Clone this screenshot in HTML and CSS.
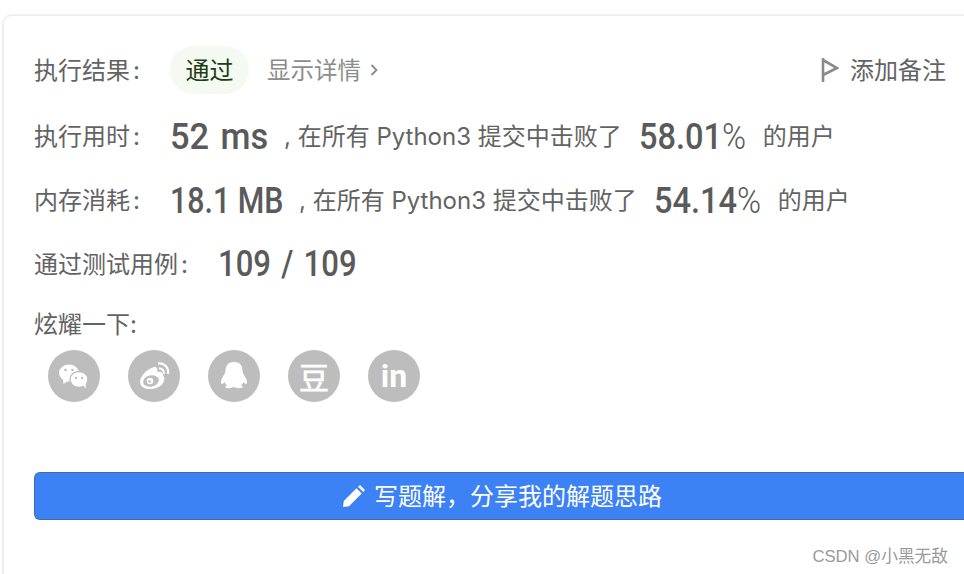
FILE: index.html
```html
<!DOCTYPE html>
<html lang="zh-CN">
<head>
    <meta charset="UTF-8">
    <meta name="viewport" content="width=device-width, initial-scale=1.0">
    <title>提交结果</title>
    <link rel="stylesheet" href="styles.css">
</head>
<body>
    <div class="card">
        <div class="row row-result">
            <span class="label">执行结果<i class="colon">:</i></span>
            <span class="pill">通过</span>
            <a class="details">显示详情
                <svg class="chevron" width="8" height="14" viewBox="0 0 8 14"><path d="M1.5 2 L6.5 7 L1.5 12" fill="none" stroke="#8a8a8a" stroke-width="1.8"/></svg>
            </a>
            <a class="note">
                <svg width="18" height="24" viewBox="0 0 18 24"><path d="M2 0 V24 M2 2 L16 10 L2 17" fill="none" stroke="#8a8a8a" stroke-width="2.6"/></svg>
                <span>添加备注</span>
            </a>
        </div>

        <div class="row row-time">
            <span class="label">执行用时<i class="colon">:</i></span>
            <span class="num num-time">52 ms</span>
            <span class="stat">, 在所有 Python3 提交中击败了</span>
            <span class="num num-pct">58.01<i class="percent">%</i></span>
            <span class="stat">的用户</span>
        </div>

        <div class="row row-memory">
            <span class="label">内存消耗<i class="colon">:</i></span>
            <span class="num num-mem">18.1 MB</span>
            <span class="stat">, 在所有 Python3 提交中击败了</span>
            <span class="num num-pct">54.14<i class="percent">%</i></span>
            <span class="stat">的用户</span>
        </div>

        <div class="row row-cases">
            <span class="label-wide">通过测试用例<i class="colon">:</i></span>
            <span class="num num-cases">109 / 109</span>
        </div>

        <div class="share-title">炫耀一下:</div>
        <div class="share">
            <div class="share-icon">
                <svg width="52" height="52" viewBox="0 0 52 52">
                    <ellipse cx="21" cy="23" rx="10" ry="8.5" fill="#fff"/>
                    <path d="M15 29 L15.5 34 L20 31 Z" fill="#fff"/>
                    <ellipse cx="31" cy="29.5" rx="9" ry="8" fill="#fff" stroke="#bdbdbd" stroke-width="1.4"/>
                    <path d="M35 35 L38 38.5 L37.5 33 Z" fill="#fff"/>
                    <circle cx="17.5" cy="20" r="1.3" fill="#bdbdbd"/>
                    <circle cx="24.5" cy="20" r="1.3" fill="#bdbdbd"/>
                    <circle cx="28" cy="28" r="1.2" fill="#bdbdbd"/>
                    <circle cx="34" cy="28" r="1.2" fill="#bdbdbd"/>
                </svg>
            </div>
            <div class="share-icon">
                <svg width="52" height="52" viewBox="0 0 52 52">
                    <path d="M12 32 C12 26 19 19 26 17 C29 16.5 30 19 29 22 C33 21 36 23 35 26 C38 27 37 38 23 39 C16 39.5 12 36 12 32 Z" fill="#fff"/>
                    <ellipse cx="23" cy="31" rx="8" ry="5.6" fill="#bdbdbd" transform="rotate(-12 23 31)"/>
                    <circle cx="22" cy="31" r="3.2" fill="#fff"/>
                    <circle cx="21.5" cy="31.5" r="1.2" fill="#bdbdbd"/>
                    <path d="M30 13.5 C36 12.5 41 17 40 24" fill="none" stroke="#fff" stroke-width="2.2"/>
                    <path d="M31 18.5 C34 18 36.5 20.5 35.8 24" fill="none" stroke="#fff" stroke-width="2"/>
                </svg>
            </div>
            <div class="share-icon">
                <svg width="52" height="52" viewBox="0 0 52 52">
                    <path d="M26 12 C19 12 17.5 17 17.5 21 C17.5 23 15 26 13.5 29.5 C12.5 32 13 34 14 34 C15 34 16 32.5 16.5 32 C17 33.5 18 34.5 19 35.5 C17 36 16.5 37.5 19 38 C22 38.5 25 37.5 26 37 C27 37.5 30 38.5 33 38 C35.5 37.5 35 36 33 35.5 C34 34.5 35 33.5 35.5 32 C36 32.5 37 34 38 34 C39 34 39.5 32 38.5 29.5 C37 26 34.5 23 34.5 21 C34.5 17 33 12 26 12 Z" fill="#fff"/>
                </svg>
            </div>
            <div class="share-icon share-text share-douban">豆</div>
            <div class="share-icon share-text share-linkedin">in</div>
        </div>

        <button class="solution">
            <svg width="24" height="24" viewBox="0 0 24 24"><path fill="#fff" d="M2 23 L2.8 17 L15.5 4.3 L20.7 9.5 L8 22.2 Z M17 2.8 L19 1 L24 6 L22.2 8 Z"/></svg>
            <span>写题解，分享我的解题思路</span>
        </button>
    </div>
    <div class="watermark">CSDN @小黑无敌</div>
</body>
</html>
```

FILE: styles.css
```css
* {
    box-sizing: border-box;
}

html, body {
    height: 100%;
}

body {
    margin: 0;
    position: relative;
    overflow: hidden;
    background-color: white;
    color: #636363;
    font-family: Inter, "Noto Sans CJK SC", sans-serif;
    font-size: 24px;
}

.card {
    height: 560px;
    margin-top: 14px;
    margin-left: 2px;
    padding: 30px 0 0 30px;
    border: 2px solid #efefef;
    border-right: none;
    border-bottom: none;
    border-top-left-radius: 10px;
}

.row {
    display: flex;
    align-items: center;
    height: 48px;
    padding-right: 18px;
}

.row-result {
    margin-bottom: 18px;
}

.row-time,
.row-memory {
    margin-bottom: 16px;
}

.label,
.label-wide,
.stat,
.note span {
    padding-bottom: 4px;
}

.label {
    width: 136px;
    flex-shrink: 0;
}

.label-wide {
    width: 184px;
    flex-shrink: 0;
}

.colon {
    font-style: normal;
    margin-left: 3px;
}

.pill {
    width: 79px;
    height: 48px;
    line-height: 49px;
    text-align: center;
    border-radius: 24px;
    background-color: #f4f9f1;
    color: #1f3d14;
}

.details {
    display: flex;
    align-items: center;
    gap: 9px;
    margin-left: 18px;
    padding-bottom: 2px;
    color: #8c8c8c;
    font-size: 23.5px;
}

.chevron {
    margin-top: 2px;
}

.note {
    display: flex;
    align-items: center;
    gap: 11px;
    margin-left: auto;
}

/* the original digits are a condensed face, none is installed */
.num {
    display: inline-block;
    flex-shrink: 0;
    white-space: nowrap;
    font-family: Roboto, sans-serif;
    font-size: 37px;
    font-weight: 500;
    color: #5a5a5a;
    transform-origin: 0 50%;
}

.num-time {
    width: 98px;
    transform: scaleX(0.93);
    word-spacing: 3px;
}

.num-pct {
    width: 108px;
    transform: scaleX(0.88);
}

.num-mem {
    width: 113px;
    transform: scaleX(0.82);
}

.num-cases {
    width: 137px;
    padding-bottom: 2px;
    transform: scaleX(0.84);
    word-spacing: 3px;
}

.percent {
    font-style: normal;
    font-weight: 300;
}

.stat {
    margin: 0 17px 0 16px;
}

.share-title {
    margin-top: 13px;
    height: 48px;
    line-height: 48px;
}

.share {
    display: flex;
    gap: 28px;
    margin-left: 14px;
    margin-top: 1px;
}

.share-icon {
    width: 52px;
    height: 52px;
    border-radius: 50%;
    background-color: #bdbdbd;
}

.share-text {
    color: white;
    text-align: center;
    line-height: 52px;
    font-weight: 700;
}

.share-douban {
    font-family: "Noto Sans CJK SC", sans-serif;
    font-size: 30px;
    font-weight: 400;
    -webkit-text-stroke: 0.6px white;
}

.share-linkedin {
    font-family: Roboto, sans-serif;
    font-size: 32px;
}

.solution {
    display: flex;
    align-items: center;
    justify-content: center;
    gap: 9px;
    width: 930px;
    height: 48px;
    margin-top: 70px;
    padding-left: 10px;
    border: 1px solid #3a6cbc;
    border-right: none;
    border-radius: 6px 0 0 6px;
    background-color: #3d82f5;
    color: white;
    font-family: inherit;
    font-size: 24px;
}

.solution span {
    padding-bottom: 3px;
}

.watermark {
    position: absolute;
    right: 16px;
    bottom: 7px;
    color: #9a9a9a;
    font-size: 16.7px;
    font-family: "Liberation Sans", "Noto Sans CJK SC", sans-serif;
}
```
